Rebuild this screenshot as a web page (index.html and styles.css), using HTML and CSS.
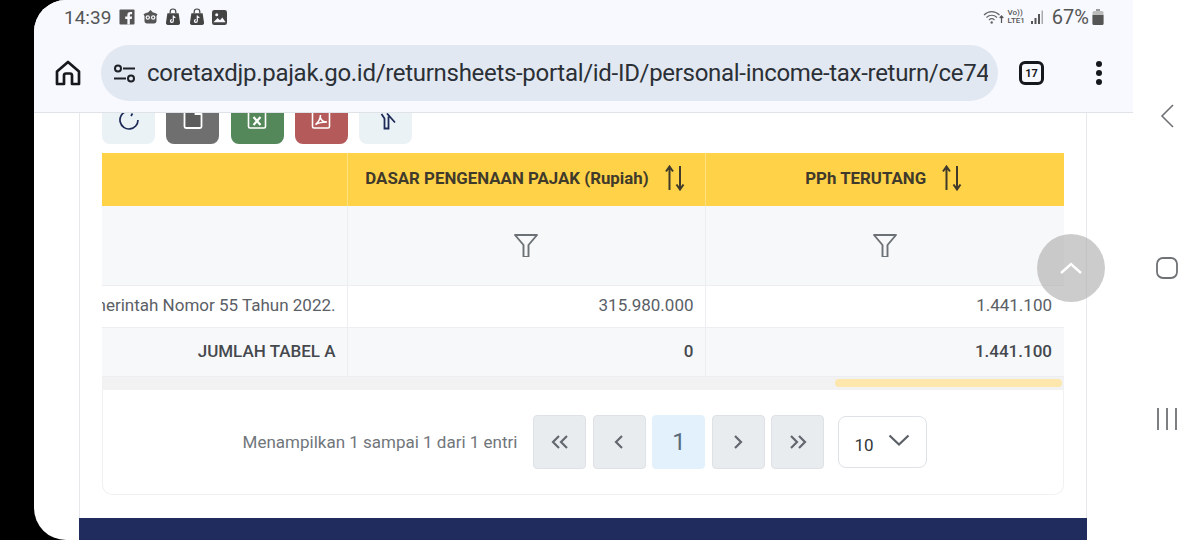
FILE: index.html
```html
<!DOCTYPE html>
<html lang="en">
<head>
    <meta charset="UTF-8">
    <meta name="viewport" content="width=device-width, initial-scale=1.0">
    <title>Coretax</title>
    <link rel="stylesheet" href="styles.css">
</head>
<body>
    <div class="screen">
        <div class="browser">
            <header class="topbar">
                <div class="status">
                    <div class="status-left">
                        <span class="time">14:39</span>
                        <svg class="notif" width="16" height="16" viewBox="0 0 17 17"><rect width="16" height="16" x="0.5" y="0.5" rx="1" fill="#555"/><path d="M11.5 16.5V10.5h2l.4-2.400h-2.400V6.700c0-.8.3-1.200 1.200-1.200h1.200V3.300h-1.800c-2.200 0-3.200 1.200-3.200 3.100v1.700H6.600v2.400h2.300v6z" fill="#f7f9fe"/></svg>
                        <svg class="notif" width="15" height="16" viewBox="0 0 15 16"><path d="M5 3.500 7.500 1 10 3.500c2 .3 3.500 1 4.500 2L13.500 7v5c0 1.500-1 2.500-2.500 2.500H4C2.500 14.500 1.500 13.500 1.500 12V7L.5 5.500c1-1 2.500-1.700 4.500-2z" fill="#555"/><circle cx="4.800" cy="8.500" r="2.200" fill="#f7f9fe"/><circle cx="10.200" cy="8.500" r="2.200" fill="#f7f9fe"/><circle cx="4.800" cy="8.500" r="1" fill="#555"/><circle cx="10.200" cy="8.500" r="1" fill="#555"/></svg>
                        <svg class="notif" width="16" height="18" viewBox="0 0 17 18"><path d="M5.500 5V3.500a3 3 0 0 1 6 0V5" fill="none" stroke="#444" stroke-width="1.300"/><path d="M2.500 5h12l1.500 10.500c0 1.200-.8 2-2 2H3c-1.200 0-2-.8-2-2z" fill="#444"/><path d="M8.800 7.500v5.700a1.500 1.500 0 1 1-1.500-1.500M8.800 7.500c.2 1.200 1 2 2.300 2.100" fill="none" stroke="#f7f9fe" stroke-width="1.300"/></svg>
                        <svg class="notif" width="16" height="18" viewBox="0 0 17 18"><path d="M5.500 5V3.500a3 3 0 0 1 6 0V5" fill="none" stroke="#444" stroke-width="1.300"/><path d="M2.500 5h12l1.500 10.500c0 1.200-.8 2-2 2H3c-1.200 0-2-.8-2-2z" fill="#444"/><path d="M8.800 7.500v5.700a1.500 1.500 0 1 1-1.500-1.500M8.800 7.500c.2 1.200 1 2 2.300 2.100" fill="none" stroke="#f7f9fe" stroke-width="1.300"/></svg>
                        <svg class="notif" width="15" height="15" viewBox="0 0 16 16"><rect width="16" height="16" rx="2.500" fill="#444"/><circle cx="5" cy="5" r="1.600" fill="#f7f9fe"/><path d="M1.500 13 6 8.500l2.500 2.300L11 8l3.500 5z" fill="#f7f9fe"/></svg>
                    </div>
                    <div class="status-right">
                        <svg class="wifi" width="21" height="17" viewBox="0 0 21 17"><g fill="none" stroke="#666" stroke-width="1.200"><path d="M1 6c4.500-4.500 11-4.500 15.500 0"/><path d="M3.500 8.500c3-3 7.500-3 10.500 0"/><path d="M6 11c1.600-1.500 3.900-1.500 5.500 0"/></g><circle cx="8.700" cy="13.500" r="1.200" fill="#666"/><path d="M18.500 7v7M16.700 9l1.800-2 1.800 2" fill="none" stroke="#555" stroke-width="1.200"/></svg>
                        <span class="volte">Vo))<br>LTE1</span>
                        <svg class="signal" width="13" height="15" viewBox="0 0 13 15"><rect x="0" y="11" width="2" height="3" fill="#555"/><rect x="3.500" y="8" width="2" height="6" fill="#555"/><rect x="7" y="4" width="2" height="10" fill="#555"/><rect x="10.500" y="0.500" width="1.500" height="13.500" fill="#aaa"/></svg>
                        <span class="battery-text">67%</span>
                        <svg width="12" height="17" viewBox="0 0 12 17"><path d="M4 0h4v2H4z" fill="#999"/><rect x="0.500" y="2" width="11" height="14" rx="1.500" fill="#bbb"/><path d="M.5 6h11v8.500a1.500 1.500 0 0 1-1.500 1.500H2a1.500 1.500 0 0 1-1.500-1.500z" fill="#555"/></svg>
                    </div>
                </div>
                <div class="toolbar">
                    <svg class="home" width="26" height="26" viewBox="0 0 26 26"><path d="M2 11.500 13 2l11 9.500V24h-7v-8.500a2 2 0 0 0-2-2h-4a2 2 0 0 0-2 2V24H2z" fill="none" stroke="#16181c" stroke-width="2.700" stroke-linejoin="round"/></svg>
                    <div class="address">
                        <svg class="tune" width="23" height="19" viewBox="0 0 23 19"><g fill="none" stroke="#1d2127" stroke-width="2"><circle cx="5" cy="4.500" r="3"/><path d="M10 4.500h12"/><circle cx="18" cy="14.500" r="3"/><path d="M1 14.500h12"/></g></svg>
                        <span class="url">coretaxdjp.pajak.go.id/returnsheets-portal/id-ID/personal-income-tax-return/ce74</span>
                    </div>
                    <div class="tabs">17</div>
                    <div class="menu-dots"><i></i><i></i><i></i></div>
                </div>
            </header>

            <main class="page">
                <div class="card">
                    <div class="actions">
                        <div class="act act-light">
                            <svg width="24" height="24" viewBox="0 0 24 24"><path d="M21 14A9 9 0 1 1 9 5.500M15.500 7.500 14 10" fill="none" stroke="#1d2a57" stroke-width="1.700"/></svg>
                        </div>
                        <div class="act act-gray">
                            <svg width="24" height="24" viewBox="0 0 24 24"><path d="M3.500 2h11l6 6v12.500a1.500 1.500 0 0 1-1.500 1.500H5a1.500 1.500 0 0 1-1.500-1.500z" fill="#5c5c5c" stroke="#fff" stroke-width="1.800"/><path d="M14.500 2v6h6" fill="none" stroke="#fff" stroke-width="1.800"/></svg>
                        </div>
                        <div class="act act-green">
                            <svg width="24" height="24" viewBox="0 0 24 24"><rect x="3.500" y="1" width="17" height="21" rx="1.500" fill="none" stroke="#fff" stroke-width="1.600"/><path d="m8.500 11 7 8M15.500 11l-7 8" stroke="#fff" stroke-width="2.200"/></svg>
                        </div>
                        <div class="act act-red">
                            <svg width="24" height="24" viewBox="0 0 24 24"><rect x="3.500" y="1" width="17" height="21" rx="1.500" fill="none" stroke="#fff" stroke-width="1.600"/><path d="M11.500 9c0 4-2 7-5 9.500M11.500 12c1 2.500 3 4 6.500 4-3.500 0-8 .5-11.500 2.500" fill="none" stroke="#fff" stroke-width="1.600"/></svg>
                        </div>
                        <div class="act act-light">
                            <svg width="24" height="24" viewBox="0 0 24 24"><path d="M7.500 8 10.500 12.500V22.500H14.500V10.500M13 7.500l8 9" fill="none" stroke="#1d2a57" stroke-width="1.800"/></svg>
                        </div>
                    </div>

                    <div class="table-wrap">
                        <table class="tax-table">
                            <colgroup>
                                <col class="col-first">
                                <col class="col-mid">
                                <col class="col-last">
                            </colgroup>
                            <tr class="head-row">
                                <th></th>
                                <th>
                                    <div class="th-inner">
                                        DASAR PENGENAAN PAJAK (Rupiah)
                                        <svg class="sort" width="24" height="26" viewBox="0 0 24 26"><path d="M6.500 25V2M3 6.500l3.500-5 3.500 5M17 1v23M13.500 19.500l3.500 5 3.500-5" fill="none" stroke="#3f3a2b" stroke-width="2"/></svg>
                                    </div>
                                </th>
                                <th>
                                    <div class="th-inner">
                                        PPh TERUTANG
                                        <svg class="sort" width="24" height="26" viewBox="0 0 24 26"><path d="M6.500 25V2M3 6.500l3.500-5 3.500 5M17 1v23M13.500 19.500l3.500 5 3.500-5" fill="none" stroke="#3f3a2b" stroke-width="2"/></svg>
                                    </div>
                                </th>
                            </tr>
                            <tr class="filter-row">
                                <td></td>
                                <td><svg width="24" height="24" viewBox="0 0 24 24"><path d="M1 2h22l-8.500 10V24h-5V12z" fill="none" stroke="#6c7176" stroke-width="1.900" stroke-linejoin="round"/></svg></td>
                                <td><svg width="24" height="24" viewBox="0 0 24 24"><path d="M1 2h22l-8.500 10V24h-5V12z" fill="none" stroke="#6c7176" stroke-width="1.900" stroke-linejoin="round"/></svg></td>
                            </tr>
                            <tr class="data-row">
                                <td class="first-cell"><div class="clip">Pemerintah Nomor 55 Tahun 2022.</div></td>
                                <td>315.980.000</td>
                                <td>1.441.100</td>
                            </tr>
                            <tr class="total-row">
                                <td>JUMLAH TABEL A</td>
                                <td>0</td>
                                <td>1.441.100</td>
                            </tr>
                        </table>
                        <div class="scrollbar"><div class="thumb"></div></div>
                    </div>

                    <div class="table-foot">
                        <span class="entries">Menampilkan 1 sampai 1 dari 1 entri</span>
                        <div class="pager">
                            <div class="pg"><svg width="20" height="16" viewBox="0 0 20 16"><path d="M9 2 3 8l6 6M17 2l-6 6 6 6" fill="none" stroke="#62686e" stroke-width="2.200"/></svg></div>
                            <div class="pg"><svg width="12" height="16" viewBox="0 0 12 16"><path d="M9 2 3 8l6 6" fill="none" stroke="#62686e" stroke-width="2.200"/></svg></div>
                            <div class="pg pg-active">1</div>
                            <div class="pg"><svg width="12" height="16" viewBox="0 0 12 16"><path d="m3 2 6 6-6 6" fill="none" stroke="#62686e" stroke-width="2.200"/></svg></div>
                            <div class="pg"><svg width="20" height="16" viewBox="0 0 20 16"><path d="m3 2 6 6-6 6M11 2l6 6-6 6" fill="none" stroke="#62686e" stroke-width="2.200"/></svg></div>
                        </div>
                        <div class="page-size">
                            <span>10</span>
                            <svg width="22" height="13" viewBox="0 0 22 13"><path d="m1.500 1.500 9.500 9 9.500-9" fill="none" stroke="#5b6066" stroke-width="2.200"/></svg>
                        </div>
                    </div>
                </div>
                <footer class="site-foot"></footer>
            </main>

            <button class="to-top">
                <svg width="24" height="14" viewBox="0 0 24 14"><path d="M2 12 12 3l10 9" fill="none" stroke="#fff" stroke-width="2.400"/></svg>
            </button>
        </div>

        <nav class="navbar">
            <svg width="14" height="24" viewBox="0 0 14 24"><path d="M13 1 2 12l11 11" fill="none" stroke="#6f7276" stroke-width="1.600"/></svg>
            <svg width="22" height="22" viewBox="0 0 22 22"><rect x="1" y="1" width="20" height="20" rx="6" fill="none" stroke="#6f7276" stroke-width="1.800"/></svg>
            <svg width="22" height="22" viewBox="0 0 22 22"><path d="M2 0v22M11 0v22M20 0v22" fill="none" stroke="#6f7276" stroke-width="1.800"/></svg>
        </nav>
    </div>
</body>
</html>
```

FILE: styles.css
```css
html, body{
    margin: 0;
    padding: 0;
    width: 100%;
    height: 100vh;
    overflow: hidden;
    background-color: black;
    font-family: Roboto, "Liberation Sans", sans-serif;
}
.screen{
    height: 540px;
    margin-left: 34px;
    display: flex;
    background-color: white;
    border-radius: 32px 0 0 32px;
    overflow: hidden;
}
.browser{
    position: relative;
    width: 1099px;
    display: flex;
    flex-direction: column;
}

/* top bar */
.topbar{
    height: 113px;
    flex-shrink: 0;
    position: relative;
    z-index: 2;
    box-sizing: border-box;
    background-color: #f7f9fe;
    border-bottom: 1px solid #dfe3e8;
}
.status{
    height: 45px;
    box-sizing: border-box;
    padding: 5px 29px 0 30px;
    display: flex;
    justify-content: space-between;
    align-items: flex-start;
}
.status-left, .status-right{
    display: flex;
    align-items: center;
    height: 24px;
}
.time{
    font-size: 19px;
    color: #555;
    margin-right: 8px;
}
.notif{
    margin-right: 7.5px;
}
.status-right .wifi{
    margin-right: 4px;
}
.volte{
    font-size: 8px;
    line-height: 8px;
    font-weight: 500;
    color: #555;
    margin-right: 6px;
}
.signal{
    margin-right: 8px;
}
.battery-text{
    font-size: 20px;
    color: #555;
    margin-right: 3px;
}
.toolbar{
    height: 56px;
    display: flex;
    align-items: center;
    padding-left: 21px;
}
.home{
    margin-right: 20px;
}
.address{
    width: 897px;
    height: 56px;
    flex-shrink: 0;
    box-sizing: border-box;
    padding: 0 10px 0 12px;
    display: flex;
    align-items: center;
    background-color: #e2e8f1;
    border-radius: 28px;
    overflow: hidden;
}
.tune{
    flex-shrink: 0;
    margin-right: 11px;
}
.url{
    font-size: 24px;
    letter-spacing: -0.3px;
    color: #2b3036;
    white-space: nowrap;
    overflow: hidden;
}
.tabs{
    width: 25px;
    height: 24px;
    box-sizing: border-box;
    margin-left: 21px;
    border: 3px solid #15181c;
    border-radius: 6px;
    display: flex;
    justify-content: center;
    align-items: center;
    font-size: 11px;
    font-weight: 700;
    color: #15181c;
}
.menu-dots{
    margin-left: 52px;
    display: flex;
    flex-direction: column;
    gap: 3px;
}
.menu-dots i{
    display: block;
    width: 6px;
    height: 6px;
    border-radius: 50%;
    background-color: #15181c;
}

/* page */
.page{
    flex: 1;
    overflow: hidden;
    padding: 0 46px 0 45px;
}
.card{
    display: flow-root;
    height: 405px;
    box-sizing: border-box;
    padding: 0 22px;
    border-left: 1px solid #e6e8ec;
    border-right: 1px solid #e6e8ec;
}
.actions{
    display: flex;
    gap: 11.25px;
    margin-top: -22px;
    margin-bottom: 9px;
}
.act{
    width: 53px;
    height: 53px;
    display: flex;
    justify-content: center;
    align-items: center;
    border-radius: 8px;
}
.act-light{
    background-color: #eaf2f6;
}
.act-gray{
    background-color: #6f6f6f;
}
.act-green{
    background-color: #54885a;
}
.act-red{
    background-color: #b55a5a;
}
.tax-table{
    width: 962px;
    border-collapse: collapse;
    table-layout: fixed;
    font-size: 17px;
    color: #5b6066;
}
.col-first{
    width: 245px;
}
.col-mid{
    width: 358px;
}
.head-row{
    height: 53px;
    background-color: #ffd247;
    color: #3f3a2b;
}
.head-row th{
    padding: 0 0 3px;
    font-size: 16.85px;
    font-weight: 700;
    border-right: 1px solid #ffe083;
}
.head-row th:last-child, .filter-row td:last-child, .data-row td:last-child, .total-row td:last-child{
    border-right: none;
}
.th-inner{
    display: flex;
    justify-content: center;
    align-items: center;
    gap: 14px;
}
.filter-row{
    height: 79px;
    background-color: #f7f8fa;
    border-bottom: 1px solid #eceef1;
}
.filter-row td{
    text-align: center;
    vertical-align: middle;
    padding: 0;
    border-right: 1px solid #eceef1;
}
.filter-row svg{
    display: block;
    margin: 0 auto;
}
.data-row{
    height: 42px;
    border-bottom: 1px solid #eceef1;
}
.data-row td, .total-row td{
    padding: 0 11px 2px 12px;
    text-align: right;
    border-right: 1px solid #eceef1;
}
.data-row .first-cell{
    padding-left: 0;
}
.data-row td:last-child, .total-row td:last-child{
    padding-right: 12px;
}
.clip{
    display: flex;
    justify-content: flex-end;
    white-space: nowrap;
    overflow: hidden;
}
.total-row{
    height: 49px;
    background-color: #f7f8fa;
    border-bottom: 1px solid #eceef1;
    font-weight: 500;
    color: #45494e;
}
.scrollbar{
    height: 13px;
    box-sizing: border-box;
    padding: 2px 2px 3px 0;
    display: flex;
    justify-content: flex-end;
    background-color: #f2f2f2;
}
.thumb{
    width: 227px;
    border-radius: 4px;
    background-color: #fde7ad;
}
.table-foot{
    height: 105px;
    box-sizing: border-box;
    padding-left: 4px;
    display: flex;
    justify-content: center;
    align-items: center;
    border: 1px solid #f0f1f3;
    border-top: none;
    border-radius: 0 0 10px 10px;
}
.entries{
    font-size: 17px;
    color: #71767b;
    margin-right: 16px;
}
.pager{
    display: flex;
    gap: 6.5px;
}
.pg{
    width: 53px;
    height: 54px;
    box-sizing: border-box;
    display: flex;
    justify-content: center;
    align-items: center;
    background-color: #e9ecef;
    border: 1px solid #dee2e6;
    border-radius: 4px;
}
.pg-active{
    background-color: #e3f1fd;
    border-color: #e3f1fd;
    font-size: 24px;
    color: #5a6b7b;
}
.page-size{
    width: 89px;
    height: 52px;
    box-sizing: border-box;
    margin-left: 14px;
    padding: 0 16px 0 15px;
    display: flex;
    justify-content: space-between;
    align-items: center;
    border: 1px solid #dee2e6;
    border-radius: 8px;
    font-size: 17px;
    color: #33373b;
}
.page-size span{
    padding-top: 6px;
}
.page-size svg{
    margin-top: -3px;
}
.site-foot{
    height: 40px;
    background-color: #212c5e;
}

/* floating up button */
.to-top{
    position: absolute;
    left: 1003px;
    top: 234px;
    width: 68px;
    height: 68px;
    padding: 0;
    border: none;
    border-radius: 50%;
    background-color: rgba(170, 170, 170, 0.6);
    display: flex;
    justify-content: center;
    align-items: center;
    z-index: 1;
}

/* android buttons */
.navbar{
    flex: 1;
    box-sizing: border-box;
    padding-top: 104px;
    display: flex;
    flex-direction: column;
    align-items: center;
    gap: 129px;
}
```
